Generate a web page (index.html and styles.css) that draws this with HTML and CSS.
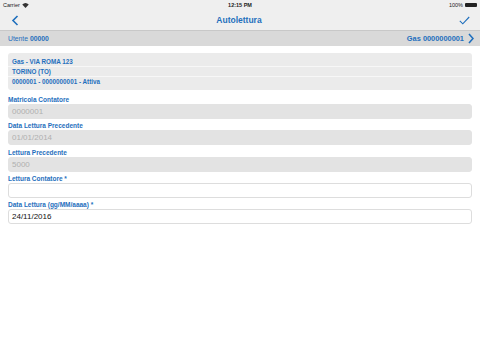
FILE: index.html
```html
<!DOCTYPE html>
<html lang="it">
<head>
    <meta charset="UTF-8">
    <meta name="viewport" content="width=device-width, initial-scale=1.0">
    <title>Autolettura</title>
    <link rel="stylesheet" href="styles.css">
</head>
<body>
    <!-- barra di stato -->
    <div class="status-bar">
        <div class="status-left">Carrier
            <svg class="wifi" width="7" height="5" viewBox="0 0 14 10"><path d="M7 10 L0.5 3.2 A9.5 9.5 0 0 1 13.5 3.2 Z" fill="#333"/></svg>
        </div>
        <div class="status-time">12:15 PM</div>
        <div class="status-right">100%
            <span class="battery"></span>
        </div>
    </div>

    <!-- barra di navigazione -->
    <div class="nav-bar">
        <svg class="nav-back" width="8" height="11" viewBox="0 0 8 11"><path d="M6.5 1 L2 5.5 L6.5 10" fill="none" stroke="#1f6fbd" stroke-width="1.6"/></svg>
        <div class="nav-title">Autolettura</div>
        <svg class="nav-check" width="11" height="9" viewBox="0 0 11 9"><path d="M0.8 4.8 L3.8 7.8 L10.2 1" fill="none" stroke="#1f6fbd" stroke-width="1.1"/></svg>
    </div>

    <div class="sub-bar">
        <div class="user">Utente <b>00000</b></div>
        <div class="supply"><b>Gas 0000000001</b>
            <svg width="6" height="11" viewBox="0 0 6 11"><path d="M1 1 L5 5.5 L1 10" fill="none" stroke="#1f6fbd" stroke-width="1.6"/></svg>
        </div>
    </div>

    <div class="content">
        <div class="info-box">
            <div class="info-row">Gas - VIA ROMA 123</div>
            <div class="info-row">TORINO (TO)</div>
            <div class="info-row">0000001 - 0000000001 - Attiva</div>
        </div>

        <div class="field">
            <label>Matricola Contatore</label>
            <div class="input disabled">0000001</div>
        </div>
        <div class="field">
            <label>Data Lettura Precedente</label>
            <div class="input disabled">01/01/2014</div>
        </div>
        <div class="field">
            <label>Lettura Precedente</label>
            <div class="input disabled">5000</div>
        </div>
        <div class="field">
            <label>Lettura Contatore *</label>
            <div class="input"></div>
        </div>
        <div class="field">
            <label>Data Lettura (gg/MM/aaaa) *</label>
            <div class="input">24/11/2016</div>
        </div>
    </div>
</body>
</html>
```

FILE: styles.css
```css
body {
    margin: 0;
    font-family: "Liberation Sans", Arial, sans-serif;
    background-color: white;
    color: #1f6fbd;
}
.status-bar {
    height: 10px;
    background-color: #efefef;
    display: flex;
    align-items: center;
    justify-content: space-between;
    padding: 0 3px;
    font-size: 5.5px;
    color: #222;
}
.status-left, .status-right {
    flex: 1;
    display: flex;
    align-items: center;
    gap: 2px;
}
.status-right {
    justify-content: flex-end;
}
.status-time {
    font-weight: bold;
}
.battery {
    display: inline-block;
    width: 12px;
    height: 4px;
    border-radius: 1px;
    background-color: #222;
}
.nav-bar {
    height: 20px;
    background-color: #efefef;
    display: flex;
    align-items: center;
    justify-content: space-between;
    padding: 0 10px 0 11px;
    border-bottom: 1px solid #c8c8c8;
}
.nav-title {
    font-size: 8.5px;
    font-weight: bold;
}
.sub-bar {
    height: 15px;
    background-color: #d9d9d9;
    display: flex;
    align-items: center;
    justify-content: space-between;
    padding: 0 6px 0 8px;
    font-size: 6.8px;
}
.supply {
    display: flex;
    align-items: center;
    gap: 4px;
    font-size: 7.4px;
}
.content {
    padding: 7px 8px;
}
.info-box {
    background-color: #ebebeb;
    border-radius: 3px;
    padding: 4px 0;
    margin-bottom: 6px;
}
.info-row {
    font-size: 6.3px;
    font-weight: bold;
    padding: 1.5px 4px;
    line-height: 6px;
    border-bottom: 1px solid #f7f7f7;
}
.info-row:last-child {
    border-bottom: none;
}
.field {
    margin-bottom: 3.25px;
}
.field label {
    display: block;
    font-size: 6.5px;
    font-weight: bold;
    line-height: 8px;
}
.input {
    box-sizing: border-box;
    height: 15px;
    line-height: 14px;
    border: 0.5px solid #ddd;
    border-radius: 3px;
    padding: 0 3px;
    font-size: 8px;
    color: #111;
    background-color: white;
}
.input.disabled {
    background-color: #e3e3e3;
    border-color: #e3e3e3;
    color: #b0b0b0;
}
```
